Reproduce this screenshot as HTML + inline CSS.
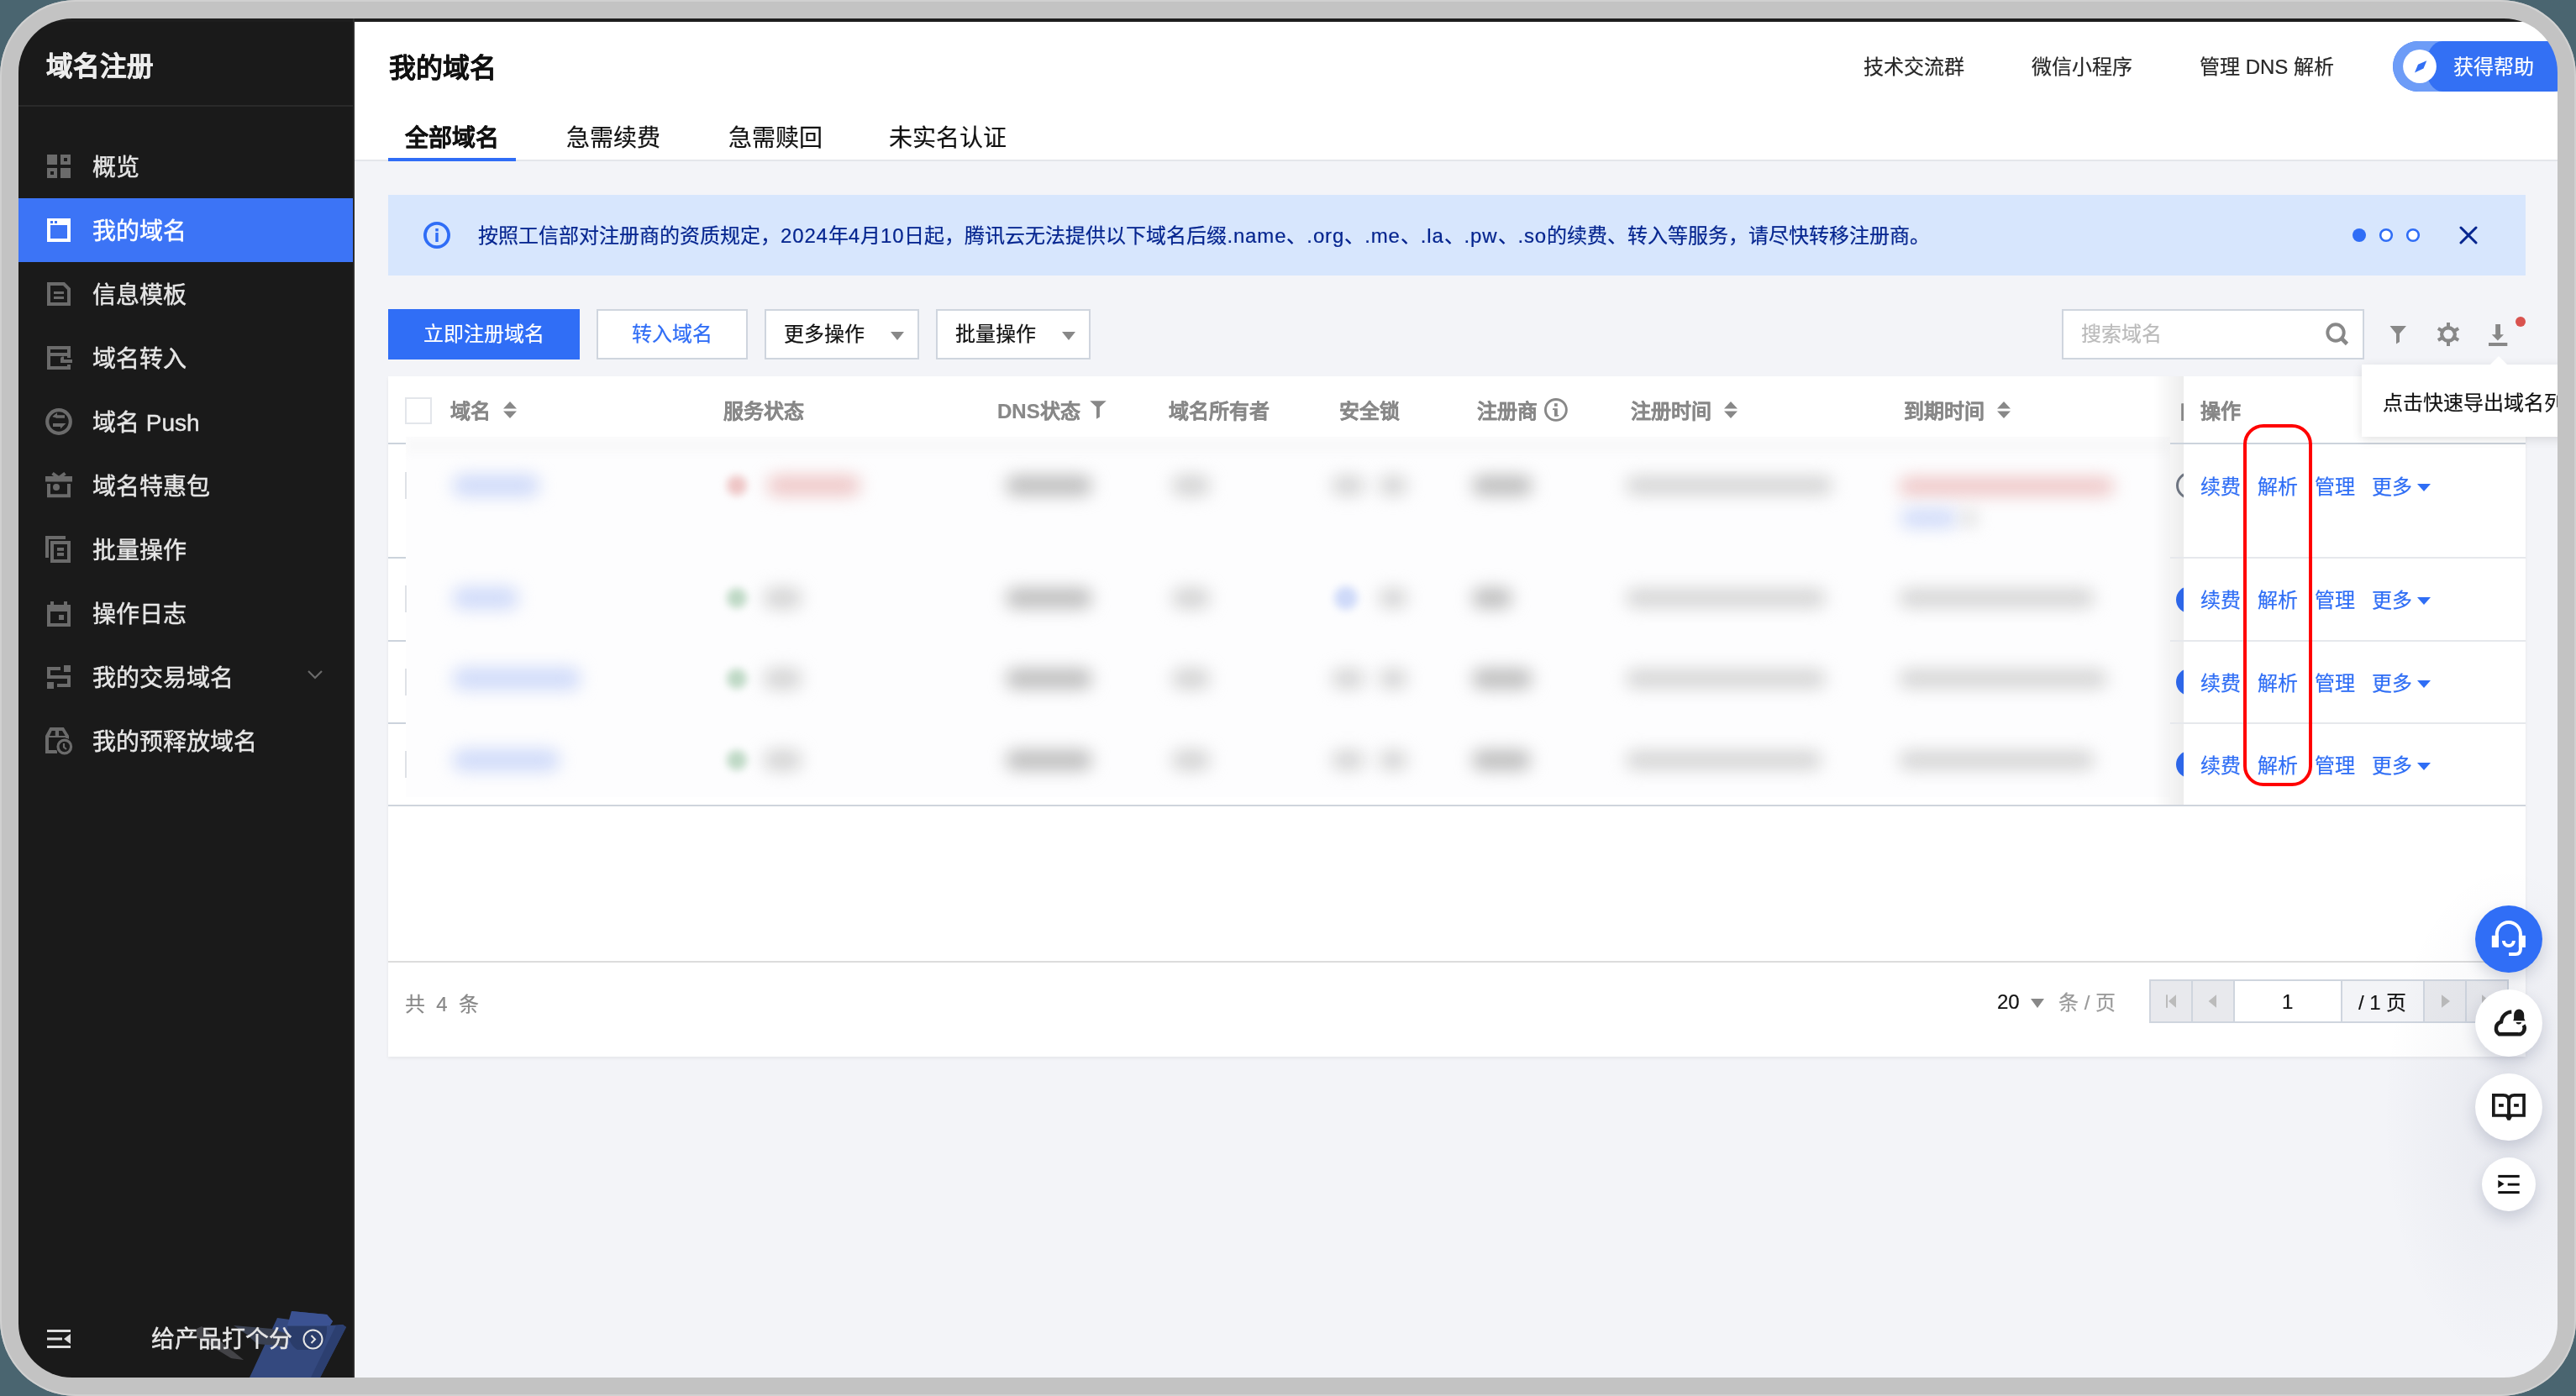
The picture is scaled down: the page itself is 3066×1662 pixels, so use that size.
<!DOCTYPE html>
<html lang="zh-CN"><head><meta charset="utf-8">
<style>
*{box-sizing:border-box;margin:0;padding:0}
html,body{width:3066px;height:1662px;overflow:hidden;background:#4a6570;font-family:"Liberation Sans",sans-serif;-webkit-text-stroke-width:0.2px}
.mi .tx,.stitle{-webkit-text-stroke-width:0.45px}
.a{position:absolute}
.t{position:absolute;white-space:nowrap}
#frame{position:absolute;left:0;top:0;width:3066px;height:1662px;border-radius:90px;background:#c3c3c3;box-shadow:inset 0 0 0 2px #d0d0d0}
#screen{will-change:transform;position:absolute;left:0;top:0;width:3066px;height:1662px;background:#f3f4f8;clip-path:inset(22px 22px 22px 22px round 64px)}
#topline{left:22px;top:22px;width:3022px;height:4px;background:#1e1e1e}
#side{left:22px;top:26px;width:400px;height:1614px;background:#1a1a1a}
#sideborder{left:420px;top:22px;width:2px;height:1618px;background:#2c2c2c}
.stitle{left:55px;top:59px;font-size:31.6px;line-height:40px;font-weight:bold;color:#ececec}
#sidesep{left:22px;top:125px;width:398px;height:2px;background:#2a2a2a}
.mi{position:absolute;left:22px;width:398px;height:76px}
.mi .tx{position:absolute;left:88px;top:2px;line-height:76px;font-size:28px;color:#e6e6e6;white-space:nowrap}
.mi.act{background:#3c74f6}
.mi.act .tx{color:#fff}
.mi svg{position:absolute;left:34px;top:24px}
#hdr{left:422px;top:26px;width:2622px;height:166px;background:#fff;border-bottom:2px solid #e4e6eb}

.ttl{left:463px;top:61px;font-size:32px;line-height:40px;font-weight:bold;color:#111}
.hl{top:60px;font-size:24px;line-height:40px;color:#272727}
.tab{top:145px;font-size:28px;line-height:40px;color:#111}
#tabline{left:462px;top:188px;width:152px;height:4px;background:#2f6df6}
#help{left:2848px;top:49px;width:220px;height:60px;border-radius:30px;background:#3572f4;overflow:hidden}
#help .l{position:absolute;left:0;top:0;width:70px;height:60px;background:#6d9cf7;border-radius:30px 0 0 30px}
#help .r{position:absolute;left:39px;top:0;width:180px;height:60px;background:#3370f4;border-radius:20px 0 0 20px / 30px 0 0 30px}
#banner{left:462px;top:232px;width:2544px;height:96px;background:#d7e6fd}
.btxt{left:569px;top:261px;font-size:24px;line-height:40px;color:#05258f}

.btn{position:absolute;top:368px;height:60px;font-size:24px;line-height:56px;text-align:center;white-space:nowrap}
.pri{background:#306ef6;color:#fff}
.sec{background:#fff;border:2px solid #cfd5de;color:#2f6df6}
.sel{background:#fff;border:2px solid #cfd5de;color:#111;text-align:left;padding-left:21px}
.sel i{position:absolute;right:16px;top:25px;width:0;height:0;border-left:8px solid transparent;border-right:8px solid transparent;border-top:10px solid #888}
#search{left:2454px;top:368px;width:360px;height:60px;background:#fff;border:2px solid #cfd5de}
#card{left:462px;top:448px;width:2544px;height:810px;background:#fff;box-shadow:0 2px 4px rgba(0,0,0,0.06)}
.th{position:absolute;top:470px;font-size:24px;line-height:40px;color:#888;font-weight:bold;white-space:nowrap}

.sort{position:absolute;width:16px;height:20px}
.blur{position:absolute;filter:blur(10px);border-radius:12px}
.bm{background:#d4d4d4}
.bb{background:#cfdaf9}
.br{background:#eec6c6}
.bg{background:#bdbdbd}
.bl{background:#d2d2d2}
.bgr{background:#bfd9c6}
.lk{position:absolute;margin-top:2px;font-size:24px;line-height:40px;color:#2f6ef5;white-space:nowrap}
.lk i{position:absolute;right:-22px;top:16px;width:0;height:0;border-left:8px solid transparent;border-right:8px solid transparent;border-top:9px solid #2f6ef5}
.rsep{position:absolute;height:2px;background:#e6e8ec}

.fab{position:absolute;left:2946px;width:80px;height:80px;border-radius:40px;background:#fff;box-shadow:0 8px 18px rgba(40,50,90,0.18)}
.pg{position:absolute;top:1166px;height:51px;border-right:2px solid #cfd5de}
.lt{letter-spacing:0.85px}
</style></head><body>
<div id="frame"></div>
<div id="screen">
  <div class="a" id="topline"></div>
  <div class="a" id="side"></div>
  <div class="a" id="sideborder"></div>
  <div class="t stitle">域名注册</div>
  <div class="a" id="sidesep"></div>
  <!-- menu -->
  <div class="mi" style="top:160px"><svg width="28" height="28" viewBox="0 0 28 28"><g fill="#6b6b6b"><rect x="0" y="0" width="12" height="12"/><rect x="16" y="0" width="12" height="12"/><rect x="0" y="16" width="12" height="12"/><rect x="16" y="16" width="12" height="12"/></g><g fill="#1a1a1a"><rect x="20" y="4" width="4" height="4"/><rect x="4" y="20" width="4" height="4"/></g></svg><div class="tx">概览</div></div>
  <div class="mi act" style="top:236px"><svg width="28" height="28" viewBox="0 0 28 28"><rect x="2" y="2" width="24" height="24" fill="none" stroke="#fff" stroke-width="4"/><rect x="0" y="0" width="28" height="8" fill="#fff"/><rect x="4" y="3" width="3" height="3" fill="#3c74f6"/><rect x="9" y="3" width="3" height="3" fill="#3c74f6"/></svg><div class="tx">我的域名</div></div>
  <div class="mi" style="top:312px"><svg width="28" height="28" viewBox="0 0 28 28"><path d="M2 2H20L26 8V26H2Z" fill="none" stroke="#6b6b6b" stroke-width="4"/><rect x="8" y="11" width="12" height="3" fill="#6b6b6b"/><rect x="8" y="17" width="12" height="3" fill="#6b6b6b"/></svg><div class="tx">信息模板</div></div>
  <div class="mi" style="top:388px"><svg width="30" height="28" viewBox="0 0 30 28"><g fill="#6b6b6b"><rect x="0" y="0" width="4" height="28"/><rect x="0" y="0" width="28" height="4"/><rect x="0" y="8" width="28" height="4"/><rect x="24" y="0" width="4" height="14"/><rect x="0" y="24" width="28" height="4"/><rect x="24" y="22" width="4" height="6"/><rect x="16" y="16" width="14" height="4"/><path d="M16 16V14.5Q16.5 13 18 12.5H20V16Z"/></g></svg><div class="tx">域名转入</div></div>
  <div class="mi" style="top:464px"><svg style="left:32px;top:22px" width="32" height="32" viewBox="0 0 32 32"><circle cx="16" cy="16" r="13.8" fill="none" stroke="#6b6b6b" stroke-width="4.2"/><path d="M8.5 10L14 5.6V8.3H23V11.8H14V11.8Z M8.5 10.2L14 11.8" fill="#6b6b6b"/><path d="M8.5 10.1L14 5.6V11.8Z" fill="#6b6b6b"/><path d="M9 18H24.5L18 24.6V22H9Z" fill="#6b6b6b"/></svg><div class="tx">域名 Push</div></div>
  <div class="mi" style="top:540px"><svg style="left:32px;top:21px" width="32" height="32" viewBox="0 0 32 32"><rect x="0" y="6" width="32" height="6.5" fill="#6b6b6b"/><path d="M8.5 2.5L16 8L23.5 2.5" fill="none" stroke="#6b6b6b" stroke-width="4"/><path d="M4 15V29.3H28V15" fill="none" stroke="#6b6b6b" stroke-width="4"/><circle cx="13" cy="19" r="4" fill="#6b6b6b"/></svg><div class="tx">域名特惠包</div></div>
  <div class="mi" style="top:616px"><svg style="left:32px;top:22px" width="32" height="32" viewBox="0 0 32 32"><g fill="#6b6b6b"><rect x="0" y="0" width="24" height="4"/><rect x="0" y="0" width="4" height="26"/><rect x="14" y="14" width="8" height="3.8"/><rect x="14" y="20" width="8" height="3.9"/></g><rect x="8" y="8" width="20" height="22" fill="none" stroke="#6b6b6b" stroke-width="4"/></svg><div class="tx">批量操作</div></div>
  <div class="mi" style="top:692px"><svg style="left:34px;top:24px" width="28" height="30" viewBox="0 0 28 30"><g fill="#6b6b6b"><rect x="4" y="0" width="4" height="5"/><rect x="20" y="0" width="4" height="5"/><rect x="0" y="4" width="28" height="8"/><rect x="0" y="4" width="4" height="26"/><rect x="24" y="4" width="4" height="26"/><rect x="0" y="26" width="28" height="4"/><rect x="14" y="16" width="6" height="6"/></g></svg><div class="tx">操作日志</div></div>
  <div class="mi" style="top:768px"><svg style="left:34px;top:24px" width="28" height="28" viewBox="0 0 28 28"><g fill="#6b6b6b"><rect x="0" y="2" width="16" height="4"/><rect x="0" y="2" width="4" height="14"/><rect x="0" y="12" width="28" height="4"/><rect x="24" y="12" width="4" height="14"/><rect x="12" y="22" width="16" height="4"/><rect x="20" y="0" width="8" height="8"/><rect x="0" y="20" width="8" height="8"/></g></svg><div class="tx">我的交易域名</div><svg style="left:344px;top:29px" width="18" height="12" viewBox="0 0 18 12"><path d="M1 2L9 10L17 2" fill="none" stroke="#6b6b6b" stroke-width="2.2"/></svg></div>
  <div class="mi" style="top:844px"><svg style="left:32px;top:22px" width="34" height="34" viewBox="0 0 34 34"><g fill="#6b6b6b"><path d="M5.5 0H21.8L28 10V14H24V12H4V27H14V31H0V10Z"/></g><path d="M5.5 0H21.8L28 10" fill="none"/><rect x="4" y="10" width="20" height="2" fill="#6b6b6b"/><path d="M7.7 4H11.8V10H5Z M16 4H20L23.7 10H16Z" fill="#1a1a1a"/><circle cx="22.8" cy="23" r="10.5" fill="#1a1a1a"/><circle cx="22.8" cy="23" r="7.8" fill="none" stroke="#6b6b6b" stroke-width="3.2"/><path d="M22 19V23.5L25 26" fill="none" stroke="#6b6b6b" stroke-width="2.2"/></svg><div class="tx">我的预释放域名</div></div>

  <div class="a" id="hdr"></div>

  <div class="t ttl">我的域名</div>
  <div class="t tab" style="left:482px;font-weight:bold">全部域名</div>
  <div class="t tab" style="left:674px">急需续费</div>
  <div class="t tab" style="left:867px">急需赎回</div>
  <div class="t tab" style="left:1058px">未实名认证</div>
  <div class="a" id="tabline"></div>
  <div class="t hl" style="left:2218px">技术交流群</div>
  <div class="t hl" style="left:2418px">微信小程序</div>
  <div class="t hl" style="left:2618px">管理 DNS 解析</div>
  <div class="a" id="help"><div class="l"></div><div class="r"></div>
    <svg class="a" style="left:12px;top:10px" width="40" height="40" viewBox="0 0 40 40"><circle cx="20" cy="20" r="19.9" fill="#fff"/><path d="M28.3 13.2L24.5 22.6L14 27.5L18 17.7Z" fill="#3370f4"/></svg>
    <div class="t" style="left:72px;top:11px;font-size:24px;line-height:40px;color:#fff">获得帮助</div>
  </div>
  <div class="a" id="banner"></div>
  <svg class="a" style="left:504px;top:264px" width="32" height="32" viewBox="0 0 32 32"><circle cx="16" cy="16" r="14.1" fill="none" stroke="#2f6df6" stroke-width="3.8"/><rect x="14.3" y="13" width="3.4" height="11" fill="#2f6df6"/><rect x="14.3" y="8" width="3.4" height="3.4" fill="#2f6df6"/></svg>
  <div class="t btxt">按照工信部对注册商的资质规定，<span class="lt">2024</span>年<span class="lt">4</span>月<span class="lt">10</span>日起，腾讯云无法提供以下域名后缀<span class="lt">.name</span>、<span class="lt">.org</span>、<span class="lt">.me</span>、<span class="lt">.la</span>、<span class="lt">.pw</span>、<span class="lt">.so</span>的续费、转入等服务，请尽快转移注册商。</div>
  <svg class="a" style="left:2790px;top:262px" width="170" height="36" viewBox="0 0 170 36"><circle cx="18" cy="18" r="8" fill="#2f6df6"/><circle cx="50" cy="18" r="6.8" fill="#fff" stroke="#2f6df6" stroke-width="2.6"/><circle cx="82" cy="18" r="6.8" fill="#fff" stroke="#2f6df6" stroke-width="2.6"/><path d="M139 9L157 27M157 9L139 27" stroke="#05258f" stroke-width="3" stroke-linecap="round"/></svg>

  <div class="btn pri" style="left:462px;width:228px;line-height:60px">立即注册域名</div>
  <div class="btn sec" style="left:710px;width:180px">转入域名</div>
  <div class="btn sel" style="left:910px;width:184px">更多操作<i></i></div>
  <div class="btn sel" style="left:1114px;width:184px">批量操作<i></i></div>
  <div class="a" id="search"><div class="t" style="left:21px;top:8px;font-size:24px;line-height:40px;color:#bbb">搜索域名</div>
    <svg class="a" style="left:312px;top:14px" width="30" height="30" viewBox="0 0 30 30"><circle cx="12" cy="12" r="9.7" fill="none" stroke="#888" stroke-width="3.9"/><path d="M18.5 18.5L25.5 25.5" stroke="#888" stroke-width="4.6"/></svg></div>
  <svg class="a" style="left:2842px;top:386px" width="24" height="26" viewBox="0 0 24 26"><path d="M2.5 2H22L14 11.3V21L10 23.5V11.3Z" fill="#888"/></svg>
  <svg class="a" style="left:2899px;top:383px" width="30" height="30" viewBox="0 0 30 30"><g fill="#888"><rect x="13" y="1" width="4" height="28"/><rect x="13" y="1" width="4" height="28" transform="rotate(60 15 15)"/><rect x="13" y="1" width="4" height="28" transform="rotate(120 15 15)"/></g><circle cx="15" cy="15" r="7.8" fill="none" stroke="#888" stroke-width="4.4"/><circle cx="15" cy="15" r="5.6" fill="#f3f4f8"/></svg>
  <svg class="a" style="left:2961px;top:385px" width="24" height="28" viewBox="0 0 24 28"><rect x="9.2" y="1" width="5.8" height="13" fill="#888"/><path d="M4.8 13.3H19L11.9 20.6Z" fill="#888"/><rect x="1" y="23" width="22.3" height="4" fill="#888"/></svg>
  <div class="a" style="left:2994px;top:377px;width:12px;height:12px;border-radius:6px;background:#d9534f"></div>
  <div class="a" id="card"></div>

  <div class="a" style="left:482px;top:473px;width:32px;height:32px;border:2px solid #e3e6eb;background:#fff"></div>
  <div class="th" style="left:536px">域名</div><svg class="sort" style="left:599px;top:478px" width="16" height="20" viewBox="0 0 16 20"><path d="M8 0L16 8.6H0Z M0 11.4H16L8 20Z" fill="#888"/></svg>
  <div class="th" style="left:861px">服务状态</div>
  <div class="th" style="left:1187px">DNS状态</div>
  <svg class="a" style="left:1297px;top:477px" width="22" height="24" viewBox="0 0 22 24"><path d="M0.2 0.3H19.8L11.9 7.6V19.6L8 21.8V7.6Z" fill="#888"/></svg>
  <div class="th" style="left:1391px">域名所有者</div>
  <div class="th" style="left:1594px">安全锁</div>
  <div class="th" style="left:1758px">注册商</div>
  <svg class="a" style="left:1838px;top:474px" width="28" height="28" viewBox="0 0 28 28"><circle cx="13.9" cy="13.9" r="12.45" fill="none" stroke="#888" stroke-width="2.9"/><g fill="#888"><rect x="12" y="6.2" width="3.8" height="3.7"/><rect x="12" y="12.2" width="3.8" height="9.6"/><rect x="10" y="12.2" width="2.5" height="1.9"/><path d="M15.5 20H17.6L16.5 21.8H15.5Z"/></g></svg>
  <div class="th" style="left:1941px">注册时间</div><svg class="sort" style="left:2052px;top:478px" width="16" height="20" viewBox="0 0 16 20"><path d="M8 0L16 8.6H0Z M0 11.4H16L8 20Z" fill="#888"/></svg>
  <div class="th" style="left:2266px">到期时间</div><svg class="sort" style="left:2377px;top:478px" width="16" height="20" viewBox="0 0 16 20"><path d="M8 0L16 8.6H0Z M0 11.4H16L8 20Z" fill="#888"/></svg>
  <div class="a" style="left:483px;top:520px;width:2100px;height:429px;background:#fdfdfe;overflow:hidden">
    <div class="a" style="left:0;top:0;width:2100px;height:20px;background:#f9f9fa;filter:blur(4px)"></div>
  </div>
  <div class="blur bb" style="left:539px;top:565px;width:103px;height:26px"></div>
  <div class="blur bb" style="left:539px;top:699px;width:78px;height:26px"></div>
  <div class="blur bb" style="left:539px;top:795px;width:152px;height:26px"></div>
  <div class="blur bb" style="left:539px;top:892px;width:127px;height:26px"></div>
  <div class="blur br" style="left:865px;top:566px;width:24px;height:24px;border-radius:12px;filter:blur(5px)"></div>
  <div class="blur br" style="left:913px;top:566px;width:111px;height:24px"></div>
  <div class="blur bgr" style="left:865px;top:700px;width:24px;height:24px;border-radius:12px;filter:blur(5px)"></div>
  <div class="blur bl" style="left:909px;top:700px;width:45px;height:24px"></div>
  <div class="blur bgr" style="left:865px;top:796px;width:24px;height:24px;border-radius:12px;filter:blur(5px)"></div>
  <div class="blur bl" style="left:909px;top:796px;width:45px;height:24px"></div>
  <div class="blur bgr" style="left:865px;top:893px;width:24px;height:24px;border-radius:12px;filter:blur(5px)"></div>
  <div class="blur bl" style="left:909px;top:893px;width:45px;height:24px"></div>
  <div class="blur bg" style="left:1197px;top:566px;width:103px;height:24px"></div>
  <div class="blur bg" style="left:1197px;top:700px;width:103px;height:24px"></div>
  <div class="blur bg" style="left:1197px;top:796px;width:103px;height:24px"></div>
  <div class="blur bg" style="left:1197px;top:893px;width:103px;height:24px"></div>
  <div class="blur bl" style="left:1395px;top:566px;width:45px;height:24px"></div>
  <div class="blur bl" style="left:1395px;top:700px;width:45px;height:24px"></div>
  <div class="blur bl" style="left:1395px;top:796px;width:45px;height:24px"></div>
  <div class="blur bl" style="left:1395px;top:893px;width:45px;height:24px"></div>
  <div class="blur bl" style="left:1585px;top:567px;width:39px;height:22px"></div>
  <div class="blur bl" style="left:1641px;top:567px;width:34px;height:22px"></div>
  <div class="blur bb" style="left:1588px;top:698px;width:28px;height:28px;border-radius:14px;filter:blur(5px)"></div>
  <div class="blur bl" style="left:1641px;top:701px;width:34px;height:22px"></div>
  <div class="blur bl" style="left:1585px;top:797px;width:39px;height:22px"></div>
  <div class="blur bl" style="left:1641px;top:797px;width:34px;height:22px"></div>
  <div class="blur bl" style="left:1585px;top:894px;width:39px;height:22px"></div>
  <div class="blur bl" style="left:1641px;top:894px;width:34px;height:22px"></div>
  <div class="blur bg" style="left:1752px;top:566px;width:72px;height:24px"></div>
  <div class="blur bg" style="left:1752px;top:700px;width:48px;height:24px"></div>
  <div class="blur bg" style="left:1752px;top:796px;width:72px;height:24px"></div>
  <div class="blur bg" style="left:1752px;top:893px;width:70px;height:24px"></div>
  <div class="blur bm" style="left:1935px;top:567px;width:246px;height:22px"></div>
  <div class="blur bm" style="left:1935px;top:701px;width:238px;height:22px"></div>
  <div class="blur bm" style="left:1935px;top:797px;width:238px;height:22px"></div>
  <div class="blur bm" style="left:1935px;top:894px;width:233px;height:22px"></div>
  <div class="blur br" style="left:2260px;top:568px;width:256px;height:22px"></div>
  <div class="blur bb" style="left:2262px;top:606px;width:68px;height:22px"></div>
  <div class="blur bl" style="left:2336px;top:608px;width:16px;height:18px"></div>
  <div class="blur bm" style="left:2260px;top:701px;width:233px;height:22px"></div>
  <div class="blur bm" style="left:2260px;top:797px;width:248px;height:22px"></div>
  <div class="blur bm" style="left:2260px;top:894px;width:233px;height:22px"></div>
  <div class="a" style="left:482px;top:562px;width:1.5px;height:32px;background:#dfe2e7"></div>
  <div class="a" style="left:482px;top:697px;width:1.5px;height:32px;background:#dfe2e7"></div>
  <div class="a" style="left:482px;top:796px;width:1.5px;height:32px;background:#dfe2e7"></div>
  <div class="a" style="left:482px;top:894px;width:1.5px;height:32px;background:#dfe2e7"></div>
  <div class="rsep" style="left:462px;top:527px;width:21px;background:#ccd3dc"></div>
  <div class="rsep" style="left:462px;top:663px;width:21px;background:#ccd3dc"></div>
  <div class="rsep" style="left:462px;top:762px;width:21px;background:#ccd3dc"></div>
  <div class="rsep" style="left:462px;top:860px;width:21px;background:#ccd3dc"></div>
  <!-- fixed column -->
  <div class="a" style="left:2563px;top:448px;width:36px;height:511px;background:linear-gradient(to right,rgba(0,0,0,0),rgba(0,0,0,0.07))"></div>
  <div class="t th" style="left:2593px;width:6px;overflow:hidden;color:#888">自</div>
  <div class="a" style="left:2599px;top:448px;width:407px;height:511px;background:#fff"></div>
  <div class="th" style="left:2619px">操作</div>
  <div class="rsep" style="left:2583px;top:527px;width:423px;background:#ccd3dc"></div>
  <div class="rsep" style="left:2583px;top:663px;width:423px"></div>
  <div class="rsep" style="left:2583px;top:762px;width:423px"></div>
  <div class="rsep" style="left:2583px;top:860px;width:423px"></div>
  <div class="a" style="left:462px;top:958px;width:2544px;height:2px;background:#cfd4dc"></div>
  <div class="a" style="left:2590px;top:562px;width:32px;height:32px;border-radius:16px;border:3px solid #6d7480;clip-path:inset(0 23px 0 0)"></div>
  <div class="a" style="left:2590px;top:698px;width:32px;height:32px;border-radius:16px;background:#2d66e8;clip-path:inset(0 23px 0 0)"></div>
  <div class="a" style="left:2590px;top:796px;width:32px;height:32px;border-radius:16px;background:#2d66e8;clip-path:inset(0 23px 0 0)"></div>
  <div class="a" style="left:2590px;top:894px;width:32px;height:32px;border-radius:16px;background:#2d66e8;clip-path:inset(0 23px 0 0)"></div>
  <div class="lk" style="left:2619px;top:558px">续费</div><div class="lk" style="left:2687px;top:558px">解析</div><div class="lk" style="left:2755px;top:558px">管理</div><div class="lk" style="left:2823px;top:558px">更多<i></i></div>
  <div class="lk" style="left:2619px;top:693px">续费</div><div class="lk" style="left:2687px;top:693px">解析</div><div class="lk" style="left:2755px;top:693px">管理</div><div class="lk" style="left:2823px;top:693px">更多<i></i></div>
  <div class="lk" style="left:2619px;top:792px">续费</div><div class="lk" style="left:2687px;top:792px">解析</div><div class="lk" style="left:2755px;top:792px">管理</div><div class="lk" style="left:2823px;top:792px">更多<i></i></div>
  <div class="lk" style="left:2619px;top:890px">续费</div><div class="lk" style="left:2687px;top:890px">解析</div><div class="lk" style="left:2755px;top:890px">管理</div><div class="lk" style="left:2823px;top:890px">更多<i></i></div>

  <div class="a" style="left:2670px;top:505px;width:82px;height:431px;border:4px solid #f00;border-radius:24px"></div>

  <div class="a" style="left:462px;top:1144px;width:2544px;height:2px;background:#dcdcdc"></div>
  <div class="t" style="left:482px;top:1176px;font-size:24px;line-height:40px;color:#888;word-spacing:0">共&nbsp;&nbsp;4&nbsp;&nbsp;条</div>
  <div class="t" style="left:2377px;top:1173px;font-size:24px;line-height:40px;color:#111">20</div>
  <div class="a" style="left:2417px;top:1189px;width:0;height:0;border-left:8px solid transparent;border-right:8px solid transparent;border-top:11px solid #888"></div>
  <div class="t" style="left:2450px;top:1174px;font-size:24px;line-height:40px;color:#999">条 / 页</div>
  <div class="a" style="left:2558px;top:1166px;width:428px;height:52px;border:2px solid #cfd5de;background:#fff"></div>
  <div class="a" style="left:2560px;top:1168px;width:50px;height:48px;background:#e8e9ed;border-right:2px solid #cfd5de"></div>
  <div class="a" style="left:2610px;top:1168px;width:50px;height:48px;background:#e8e9ed;border-right:2px solid #cfd5de"></div>
  <div class="a" style="left:2786px;top:1168px;width:100px;height:48px;background:#f3f4f7;border-left:2px solid #cfd5de;border-right:2px solid #cfd5de"></div>
  <div class="a" style="left:2886px;top:1168px;width:50px;height:48px;background:#e8e9ed;border-right:2px solid #cfd5de"></div>
  <div class="a" style="left:2936px;top:1168px;width:48px;height:48px;background:#e8e9ed"></div>
  <svg class="a" style="left:2577px;top:1184px" width="14" height="16" viewBox="0 0 14 16"><rect x="1" y="0.3" width="2" height="15.5" fill="#bbb"/><path d="M13 0.3V15.8L4 8Z" fill="#bbb"/></svg>
  <svg class="a" style="left:2628px;top:1184px" width="12" height="16" viewBox="0 0 12 16"><path d="M10 0.3V15.8L0.6 8Z" fill="#bbb"/></svg>
  <div class="t" style="left:2716px;top:1173px;font-size:24px;line-height:40px;color:#111">1</div>
  <div class="t" style="left:2807px;top:1174px;font-size:24px;line-height:40px;color:#111">/ 1 页</div>
  <svg class="a" style="left:2905px;top:1184px" width="12" height="16" viewBox="0 0 12 16"><path d="M1 0.3V15.8L11 8Z" fill="#bbb"/></svg>
  <svg class="a" style="left:2953px;top:1184px" width="14" height="16" viewBox="0 0 14 16"><path d="M1 0.3V15.8L10 8Z" fill="#bbb"/><rect x="11" y="0.3" width="2" height="15.5" fill="#bbb"/></svg>
  <!-- tooltip -->
  <div class="a" style="left:2811px;top:434px;width:260px;height:86px;background:#fff;box-shadow:0 3px 12px rgba(0,0,0,0.12)"></div>
  <svg class="a" style="left:2963px;top:423px" width="22" height="12" viewBox="0 0 22 12"><path d="M0 12L11 1L22 12Z" fill="#fff"/></svg>
  <div class="t" style="left:2836px;top:460px;font-size:24px;line-height:40px;color:#111">点击快速导出域名列表</div>
  <!-- floating -->
  <div class="a" style="left:2800px;top:1000px;width:372px;height:640px;background:radial-gradient(ellipse 150px 300px at 186px 330px,rgba(40,50,90,0.06),rgba(40,50,90,0) 100%)"></div>
  <div class="fab" style="top:1078px;background:#306ef6"><svg class="a" style="left:0;top:0" width="80" height="80" viewBox="0 0 80 80"><path d="M25.8 37V34A14.05 14.05 0 0 1 53.9 34V52Q53.9 57.9 48 57.9H40.1" fill="none" stroke="#fff" stroke-width="4"/><rect x="19.8" y="35.8" width="8.2" height="14.1" fill="#fff"/><rect x="51.9" y="35.8" width="8" height="14.1" fill="#fff"/><path d="M33.9 42.1A6 6 0 0 0 45.9 42.1" fill="none" stroke="#fff" stroke-width="4"/></svg></div>
  <div class="fab" style="top:1178px"><svg class="a" style="left:0;top:0" width="80" height="80" viewBox="0 0 80 80"><path d="M43.3 26.6A13 13 0 0 0 31 38.5A8.2 8.2 0 0 0 28.5 53.2H50.5A7 7 0 0 0 57.6 42.5" fill="none" stroke="#1a1a1a" stroke-width="4.4"/><path d="M46.1 30.5A6.05 7 0 0 1 58.2 30.5V34.4L59.6 37.2H45.3L46.1 34.4Z" fill="#1a1a1a"/><path d="M48.7 39H55A3.15 2.4 0 0 1 48.7 39Z" fill="#1a1a1a"/></svg></div>
  <div class="fab" style="top:1278px"><svg class="a" style="left:0;top:0" width="80" height="80" viewBox="0 0 80 80"><path d="M21.85 25.85H33.5Q40.1 25.85 40.1 32.5M58.05 25.85H46.7Q40.1 25.85 40.1 32.5" fill="none" stroke="#1a1a1a" stroke-width="3.7"/><path d="M21.85 24V50H58.05V24" fill="none" stroke="#1a1a1a" stroke-width="3.7"/><rect x="38.1" y="30" width="4" height="22" fill="#1a1a1a"/><path d="M35.5 50H44.7L41.7 55.7H38.5Z" fill="#1a1a1a"/><rect x="28" y="36.1" width="5.8" height="3.7" fill="#1a1a1a"/><rect x="46.1" y="36.1" width="5.8" height="3.7" fill="#1a1a1a"/></svg></div>
  <div class="fab" style="left:2954px;top:1378px;width:64px;height:64px;border-radius:32px"><svg class="a" style="left:0;top:0" width="64" height="64" viewBox="0 0 64 64"><g fill="#111"><rect x="19.3" y="20.9" width="25.4" height="3"/><rect x="30.7" y="30.7" width="14" height="2.9"/><rect x="19.3" y="40.1" width="25.4" height="3"/><path d="M19.3 27L26.6 31.6L19.3 36.2Z"/></g></svg></div>
  <!-- sidebar bottom -->
  <svg class="a" style="left:56px;top:1583px" width="28" height="22" viewBox="0 0 28 22"><rect x="0" y="0" width="28" height="3" fill="#ddd"/><rect x="0" y="19" width="28" height="3" fill="#ddd"/><rect x="0" y="9.5" width="18" height="3" fill="#ddd"/><path d="M28 5V17L20 11Z" fill="#ddd"/></svg>
  <svg class="a" style="left:220px;top:1545px" width="200" height="95" viewBox="0 0 200 95"><path d="M77 95L110 24L125 26L127 16L169 20L176 28L173 33L188 32L192 35L161 95Z" fill="#34497f"/><path d="M188 32L192 35L161 95L150 95L180 33Z" fill="#2c3f70"/><path d="M127 16L169 20L176 28L173 33L122 33Z" fill="#3b5292"/><path d="M58 33L104 37L125 44L120 58L86 55L74 44Z" fill="#3a4152"/><path d="M122 34H169Q170 50 160 62H134Q122 55 122 34Z" fill="#2a3c6a"/><path d="M14 37L20 34L70 74L55 72L14 47Z" fill="#434347"/></svg>
  <div class="t" style="left:180px;top:1575px;font-size:28px;line-height:40px;color:#e6e6e6;-webkit-text-stroke-width:0.45px">给产品打个分</div>
  <svg class="a" style="left:360px;top:1582px" width="25" height="25" viewBox="0 0 25 25"><circle cx="12.5" cy="12.5" r="11" fill="none" stroke="#e6e6e6" stroke-width="2"/><path d="M10.5 8L15 12.5L10.5 17" fill="none" stroke="#e6e6e6" stroke-width="2"/></svg>
</div>
</body></html>
